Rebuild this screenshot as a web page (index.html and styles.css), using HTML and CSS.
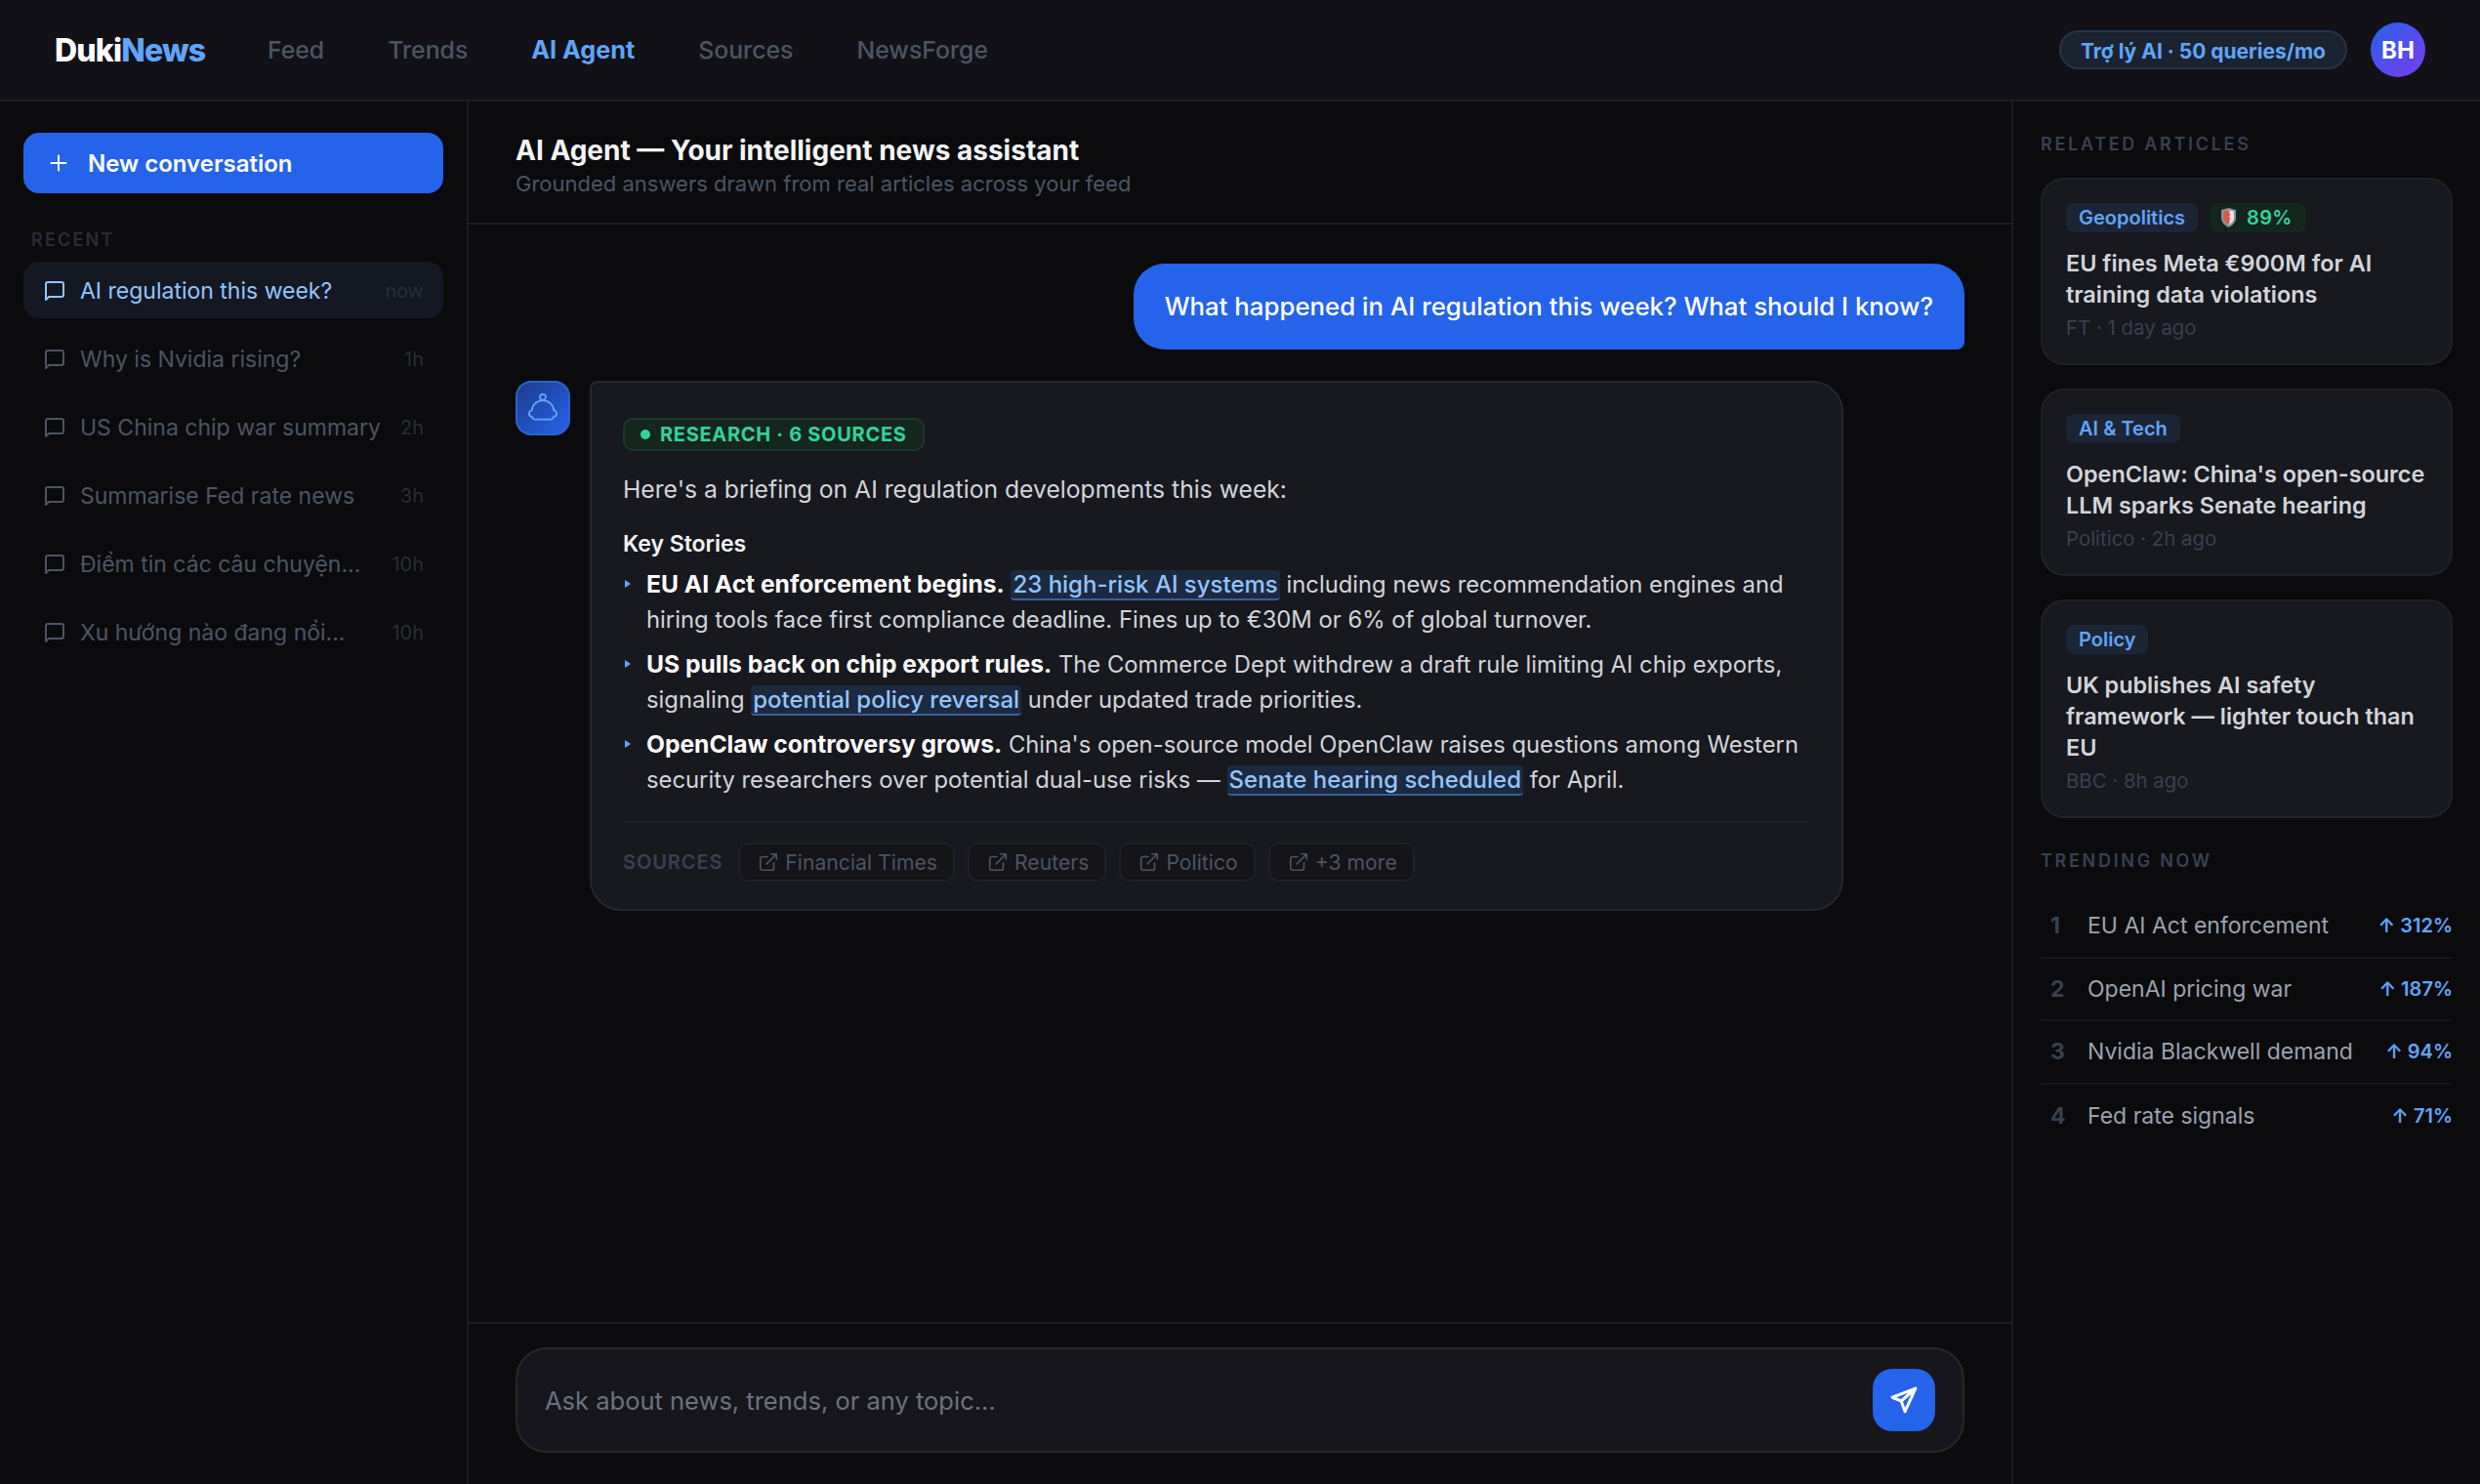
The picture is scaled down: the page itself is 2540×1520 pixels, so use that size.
FILE: index.html
```html
<!DOCTYPE html>
<html lang="en">
<head>
<meta charset="utf-8">
<title>DukiNews</title>
<link rel="stylesheet" href="styles.css">
</head>
<body>
<header class="topbar">
  <div class="logo">Duki<span>News</span></div>
  <nav class="nav">
    <a>Feed</a><a>Trends</a><a class="active">AI Agent</a><a>Sources</a><a>NewsForge</a>
  </nav>
  <div class="top-right">
    <div class="quota">Trợ lý AI · 50 queries/mo</div>
    <div class="avatar">BH</div>
  </div>
</header>
<div class="layout">
  <aside class="sidebar">
    <button class="new-btn"><svg class="plus" viewBox="0 0 24 24"><path d="M12 3v18M3 12h18"/></svg>New conversation</button>
    <div class="recent-label">RECENT</div>
    <ul class="conv-list">
      <li class="conv active"><svg viewBox="0 0 24 24"><path d="M3 21V5a2 2 0 0 1 2-2h14a2 2 0 0 1 2 2v11a2 2 0 0 1-2 2H6z"/></svg><span class="conv-title">AI regulation this week?</span><span class="conv-time">now</span></li>
      <li class="conv"><svg viewBox="0 0 24 24"><path d="M3 21V5a2 2 0 0 1 2-2h14a2 2 0 0 1 2 2v11a2 2 0 0 1-2 2H6z"/></svg><span class="conv-title">Why is Nvidia rising?</span><span class="conv-time">1h</span></li>
      <li class="conv"><svg viewBox="0 0 24 24"><path d="M3 21V5a2 2 0 0 1 2-2h14a2 2 0 0 1 2 2v11a2 2 0 0 1-2 2H6z"/></svg><span class="conv-title">US China chip war summary</span><span class="conv-time">2h</span></li>
      <li class="conv"><svg viewBox="0 0 24 24"><path d="M3 21V5a2 2 0 0 1 2-2h14a2 2 0 0 1 2 2v11a2 2 0 0 1-2 2H6z"/></svg><span class="conv-title">Summarise Fed rate news</span><span class="conv-time">3h</span></li>
      <li class="conv"><svg viewBox="0 0 24 24"><path d="M3 21V5a2 2 0 0 1 2-2h14a2 2 0 0 1 2 2v11a2 2 0 0 1-2 2H6z"/></svg><span class="conv-title">Điểm tin các câu chuyện...</span><span class="conv-time">10h</span></li>
      <li class="conv"><svg viewBox="0 0 24 24"><path d="M3 21V5a2 2 0 0 1 2-2h14a2 2 0 0 1 2 2v11a2 2 0 0 1-2 2H6z"/></svg><span class="conv-title">Xu hướng nào đang nổi...</span><span class="conv-time">10h</span></li>
    </ul>
  </aside>
  <main class="main">
    <div class="main-head">
      <h1>AI Agent — Your intelligent news assistant</h1>
      <p>Grounded answers drawn from real articles across your feed</p>
    </div>
    <div class="chat">
      <div class="user-row"><div class="user-msg">What happened in AI regulation this week? What should I know?</div></div>
      <div class="ai-row">
        <div class="bot">
          <svg viewBox="0 0 28 28"><circle cx="14" cy="3.500" r="2.800"/><path d="M14 6.700c-5.500 0-10 4-10.500 9.300C1.800 16.500.8 17.800.8 19.300c0 1.700 1.200 2.700 3 3 .2 1.500 1.200 2.500 3 2.500h14.400c1.800 0 2.800-1 3-2.500 1.800-.3 3-1.300 3-3 0-1.500-1-2.800-2.700-3.300C24 10.700 19.500 6.700 14 6.700z"/></svg>
        </div>
        <div class="ai-card">
          <div class="research"><i></i>RESEARCH · 6 SOURCES</div>
          <p class="intro">Here's a briefing on AI regulation developments this week:</p>
          <h3>Key Stories</h3>
          <ul class="stories">
            <li><b>EU AI Act enforcement begins.</b> <a>23 high-risk AI systems</a> including news recommendation engines and hiring tools face first compliance deadline. Fines up to €30M or 6% of global turnover.</li>
            <li><b>US pulls back on chip export rules.</b> The Commerce Dept withdrew a draft rule limiting AI chip exports, signaling <a>potential policy reversal</a> under updated trade priorities.</li>
            <li><b>OpenClaw controversy grows.</b> China's open-source model OpenClaw raises questions among Western security researchers over potential dual-use risks — <a>Senate hearing scheduled</a> for April.</li>
          </ul>
          <div class="sources">
            <span class="sources-label">SOURCES</span>
            <span class="chip"><svg viewBox="0 0 24 24"><path d="M18 13v6a2 2 0 0 1-2 2H5a2 2 0 0 1-2-2V8a2 2 0 0 1 2-2h6M15 3h6v6M10 14 21 3"/></svg>Financial Times</span>
            <span class="chip"><svg viewBox="0 0 24 24"><path d="M18 13v6a2 2 0 0 1-2 2H5a2 2 0 0 1-2-2V8a2 2 0 0 1 2-2h6M15 3h6v6M10 14 21 3"/></svg>Reuters</span>
            <span class="chip"><svg viewBox="0 0 24 24"><path d="M18 13v6a2 2 0 0 1-2 2H5a2 2 0 0 1-2-2V8a2 2 0 0 1 2-2h6M15 3h6v6M10 14 21 3"/></svg>Politico</span>
            <span class="chip"><svg viewBox="0 0 24 24"><path d="M18 13v6a2 2 0 0 1-2 2H5a2 2 0 0 1-2-2V8a2 2 0 0 1 2-2h6M15 3h6v6M10 14 21 3"/></svg>+3 more</span>
          </div>
        </div>
      </div>
    </div>
    <div class="composer">
      <div class="input-box">
        <span class="placeholder">Ask about news, trends, or any topic...</span>
        <button class="send"><svg viewBox="0 0 24 24"><path d="M21.500 2.500 2.500 9.800l7.300 3 3 8.700zM21.500 2.500 9.800 12.800"/></svg></button>
      </div>
    </div>
  </main>
  <aside class="right">
    <div class="section-label">RELATED ARTICLES</div>
    <article class="card">
      <div class="tags"><span class="tag">Geopolitics</span><span class="tag green"><svg class="shield" viewBox="0 0 15 20"><path class="s-a" d="M7.500 0 15 2v8c0 4.500-3 7.500-7.500 10C3 17.500 0 14.500 0 10V2z"/><path class="s-c" d="M7.500 2 13 3.500V10c0 3.200-2 5.500-5.500 7.500z"/><path class="s-b" d="M2.500 3.500 9 2.500l-1 2.500 1.500 2L8 9l1.500 2L8 13l1 1.800-1.500 1.700C4.500 15 2.500 13 2.500 10z"/></svg>89%</span></div>
      <h4>EU fines Meta €900M for AI training data violations</h4>
      <div class="meta">FT · 1 day ago</div>
    </article>
    <article class="card">
      <div class="tags"><span class="tag">AI &amp; Tech</span></div>
      <h4>OpenClaw: China's open-source LLM sparks Senate hearing</h4>
      <div class="meta">Politico · 2h ago</div>
    </article>
    <article class="card">
      <div class="tags"><span class="tag">Policy</span></div>
      <h4>UK publishes AI safety framework — lighter touch than EU</h4>
      <div class="meta">BBC · 8h ago</div>
    </article>
    <div class="section-label trending-label">TRENDING NOW</div>
    <ol class="trending">
      <li><span class="num">1</span><span class="t-name">EU AI Act enforcement</span><span class="pct">↑ 312%</span></li>
      <li><span class="num">2</span><span class="t-name">OpenAI pricing war</span><span class="pct">↑ 187%</span></li>
      <li><span class="num">3</span><span class="t-name">Nvidia Blackwell demand</span><span class="pct">↑ 94%</span></li>
      <li><span class="num">4</span><span class="t-name">Fed rate signals</span><span class="pct">↑ 71%</span></li>
    </ol>
  </aside>
</div>
</body>
</html>
```
FILE: styles.css
```css
* { box-sizing: border-box; }
html, body { margin: 0; height: 100%; }
body {
  width: 2540px; height: 1520px; overflow: hidden;
  background: #0b0b0e; color: #e5e7eb;
  font-family: Inter, "Noto Sans", sans-serif;
  display: flex; flex-direction: column;
}
h1, h3, h4, p, ul, ol { margin: 0; padding: 0; list-style: none; }

.topbar {
  height: 104px; flex: none; display: flex; align-items: center;
  padding: 0 56px; background: #111117; border-bottom: 2px solid #1c1c24;
}
.logo { font-size: 32px; font-weight: 800; letter-spacing: -0.8px; color: #fff; width: 218px; }
.logo span { color: #60a5fa; }
.nav { display: flex; gap: 65px; font-size: 24.800px; font-weight: 500; color: #4b5563; }
.nav .active { color: #60a5fa; font-weight: 700; font-size: 25.200px; }
.top-right { margin-left: auto; display: flex; align-items: center; gap: 24px; }
.quota {
  height: 40px; padding: 2px 20px 0; display: flex; align-items: center;
  border: 2px solid #25344d; border-radius: 20px; background: #1b2331;
  color: #60a5fa; font-size: 21px; font-weight: 700;
}
.avatar {
  width: 56px; height: 56px; border-radius: 50%; display: flex; align-items: center; justify-content: center;
  background: linear-gradient(135deg, #2563eb, #7c3aed); color: #fff; font-size: 24px; font-weight: 700;
}

.layout { flex: 1; display: flex; min-height: 0; }
.sidebar { width: 480px; flex: none; padding: 32px 24px; border-right: 2px solid #1c1c24; }
.new-btn {
  width: 100%; height: 62px; display: flex; align-items: center; gap: 20px; padding: 0 26px;
  background: #2563eb; border: 0; border-radius: 16px; color: #fff;
  font: 600 24px Inter, sans-serif;
}
.plus { width: 20px; height: 20px; fill: none; stroke: #fff; stroke-width: 2.400; stroke-linecap: round; }
.recent-label { margin: 37px 0 11px 8px; font-size: 18px; font-weight: 600; letter-spacing: 2.200px; color: #2a2d36; line-height: 22px; }
.conv-list { display: flex; flex-direction: column; gap: 12px; }
.conv {
  height: 58px; display: flex; align-items: center; padding: 2px 20px 0; border-radius: 16px;
  font-size: 23px; color: #4b5563;
}
.conv svg { width: 24px; height: 24px; margin-right: 14px; fill: none; stroke: currentColor; stroke-width: 2; stroke-linejoin: round; flex: none; }
.conv-title { flex: 1; white-space: nowrap; }
.conv-time { font-size: 20px; color: #2a2d36; }
.conv.active { background: #141822; color: #93c5fd; }

.main { flex: 1; display: flex; flex-direction: column; min-width: 0; }
.main-head { height: 126px; flex: none; padding: 32px 48px 0; border-bottom: 2px solid #1c1c24; }
.main-head h1 { font-size: 28px; font-weight: 700; color: #f3f4f6; line-height: 36px; }
.main-head p { margin-top: 1px; font-size: 22px; color: #4b5563; line-height: 30px; }
.chat { flex: 1; padding: 40px 48px 0; display: flex; flex-direction: column; gap: 32px; min-height: 0; }
.user-row { display: flex; justify-content: flex-end; }
.user-msg {
  height: 88px; padding: 0 32px 2px; display: flex; align-items: center;
  background: #2563eb; color: #fff; font-size: 25.800px; font-weight: 500;
  border-radius: 32px 32px 8px 32px;
}
.ai-row { display: flex; gap: 20px; }
.bot {
  width: 56px; height: 56px; flex: none; border-radius: 16px; display: flex; align-items: center; justify-content: center;
  background: linear-gradient(135deg, #1e3a8a, #2563eb); border: 2px solid #2f62c9;
}
.bot svg { width: 30px; height: 30px; fill: none; stroke: #60a5fa; stroke-width: 1.700; stroke-linejoin: round; }
.ai-card {
  width: 1284px; background: #18181f; border: 2px solid #26262f; border-radius: 8px 32px 32px 32px;
  padding: 36px 32px 28px;
}
.research {
  display: inline-flex; align-items: center; height: 34px; padding: 0 16px; gap: 10px;
  background: #15261f; border: 2px solid #1a3a2e; border-radius: 10px;
  color: #34d399; font-size: 20px; font-weight: 700; letter-spacing: 0.700px;
}
.research i { width: 10px; height: 10px; border-radius: 50%; background: #34d399; }
.intro { margin-top: 20.500px; font-size: 24.700px; line-height: 36px; color: #d1d5db; }
.ai-card h3 { margin-top: 22.500px; font-size: 23px; font-weight: 600; line-height: 32px; color: #f3f4f6; }
.stories { margin-top: 6.500px; display: flex; flex-direction: column; gap: 9px; font-size: 23.800px; line-height: 36px; color: #d1d5db; }
.stories li { position: relative; padding-left: 24px; }
.stories li::before {
  content: ""; position: absolute; left: 2px; top: 14px;
  border-left: 6px solid #60a5fa; border-top: 4px solid transparent; border-bottom: 4px solid transparent;
}
.stories b { color: #fff; font-weight: 700; font-size: 24.600px; }
.stories a { color: #93c5fd; font-size: 24px; font-weight: 500; background: #1c2a40; border-bottom: 2px solid #3b5f99; border-radius: 4px; padding: 0 2px; }
.sources {
  margin-top: 24px; padding-top: 20px; border-top: 2px solid #202028;
  display: flex; align-items: center; gap: 13px;
}
.sources-label { font-size: 20px; font-weight: 600; letter-spacing: 0.900px; color: #374151; margin-right: 3px; }
.chip {
  height: 40px; padding: 0 16px 0 18px; display: flex; align-items: center; gap: 6px;
  border: 2px solid #202028; border-radius: 10px; background: #141419;
  font-size: 21.200px; color: #4b5563;
}
.chip svg { width: 22px; height: 22px; fill: none; stroke: currentColor; stroke-width: 1.800; stroke-linecap: round; stroke-linejoin: round; }

.composer { height: 166px; flex: none; padding: 24px 48px 0; border-top: 2px solid #1c1c24; }
.input-box {
  height: 108px; display: flex; align-items: center; justify-content: space-between;
  padding: 0 28px 0 28px; background: #16161c; border: 2px solid #26262f; border-radius: 32px;
}
.placeholder { font-size: 25.500px; color: #6b7280; }
.send { width: 64px; height: 64px; padding: 0; border: 0; border-radius: 20px; background: #2563eb; display: flex; align-items: center; justify-content: center; }
.send svg { width: 30px; height: 30px; fill: none; stroke: #fff; stroke-width: 2.400; stroke-linejoin: round; stroke-linecap: round; }

.right { width: 480px; flex: none; padding: 33px 28px; border-left: 2px solid #1c1c24; }
.section-label { font-size: 18px; font-weight: 600; letter-spacing: 2.700px; color: #374151; line-height: 22px; }
.card {
  margin-top: 24px; padding: 24px 24px 22px; background: #18181f; border: 2px solid #202028; border-radius: 24px;
}
.section-label + .card { margin-top: 23px; }
.tags { display: flex; gap: 12px; }
.tag {
  height: 30px; padding: 0 13px; display: flex; align-items: center; border-radius: 8px;
  background: #1c2536; color: #60a5fa; font-size: 20px; font-weight: 600;
}
.tag.green { background: #15261f; color: #34d399; gap: 11px; padding: 0 14px 0 12px; letter-spacing: 0.300px; }
.shield { width: 15px; height: 20px; }
.s-a { fill: #8f8f94; }
.s-b { fill: #d9574a; }
.s-c { fill: #e4e4e4; }
.card h4 { margin-top: 16px; font-size: 23.400px; font-weight: 600; line-height: 32px; color: #d1d5db; }
.meta { margin-top: 4px; font-size: 20.400px; line-height: 28px; color: #374151; }
.trending-label { margin-top: 33px; }
.trending { margin-top: 24px; }
.trending li {
  height: 64.500px; display: flex; align-items: center; border-bottom: 2px solid #15151b;
  font-size: 23px; color: #9ca3af;
}
.trending li:last-child { border-bottom: 0; }
.num { width: 48px; padding-left: 10px; font-weight: 700; color: #374151; }
.t-name { flex: 1; white-space: nowrap; }
.pct { font-size: 20px; font-weight: 600; color: #60a5fa; }
```
